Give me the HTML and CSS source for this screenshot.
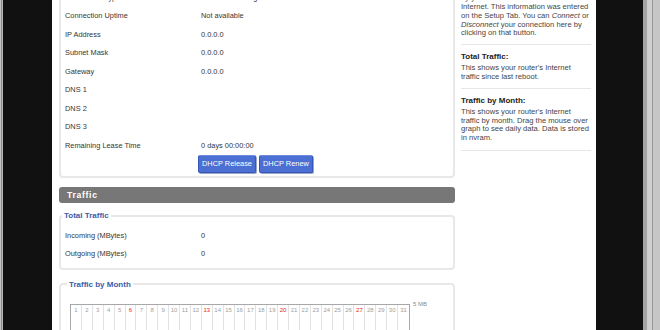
FILE: index.html
```html
<!DOCTYPE html>
<html lang="en">
<head>
    <meta charset="UTF-8">
    <meta name="viewport" content="width=device-width, initial-scale=1.0">
    <title>Status - WAN</title>
    <link rel="stylesheet" href="styles.css">
</head>
<body>
    <div class="screen">
        <div class="edge edge-left"></div>
        <div class="bezel"></div>

        <div class="page">
            <div class="main">
                <div class="panel">
                    <div class="row"><span class="label">Connection Type</span><span class="value">Automatic Configuration - DHCP</span></div>
                    <div class="row"><span class="label">Connection Uptime</span><span class="value">Not available</span></div>
                    <div class="row"><span class="label">IP Address</span><span class="value">0.0.0.0</span></div>
                    <div class="row"><span class="label">Subnet Mask</span><span class="value">0.0.0.0</span></div>
                    <div class="row"><span class="label">Gateway</span><span class="value">0.0.0.0</span></div>
                    <div class="row"><span class="label">DNS 1</span><span class="value"></span></div>
                    <div class="row"><span class="label">DNS 2</span><span class="value"></span></div>
                    <div class="row"><span class="label">DNS 3</span><span class="value"></span></div>
                    <div class="row"><span class="label">Remaining Lease Time</span><span class="value">0 days 00:00:00</span></div>
                    <div class="row actions">
                        <button class="btn">DHCP Release</button>
                        <button class="btn">DHCP Renew</button>
                    </div>
                </div>

                <h2 class="section-bar">Traffic</h2>

                <fieldset class="group">
                    <legend>Total Traffic</legend>
                    <div class="row"><span class="label">Incoming (MBytes)</span><span class="value">0</span></div>
                    <div class="row"><span class="label">Outgoing (MBytes)</span><span class="value">0</span></div>
                </fieldset>

                <fieldset class="group month">
                    <legend>Traffic by Month</legend>
                    <div class="graph-wrap">
                        <div class="graph">
                            <span>1</span><span>2</span><span>3</span><span>4</span><span>5</span>
                            <span class="sun">6</span><span>7</span><span>8</span><span>9</span><span>10</span>
                            <span>11</span><span>12</span><span class="sun">13</span><span>14</span><span>15</span>
                            <span>16</span><span>17</span><span>18</span><span>19</span><span class="sun">20</span>
                            <span>21</span><span>22</span><span>23</span><span>24</span><span>25</span>
                            <span>26</span><span class="sun">27</span><span>28</span><span>29</span><span>30</span>
                            <span>31</span>
                        </div>
                        <span class="scale">5 MB</span>
                    </div>
                </fieldset>
            </div>

            <div class="help">
                <div class="help-item">
                    <h4>WAN:</h4>
                    <p>This shows the information required by your ISP for connection to the Internet. This information was entered on the Setup Tab. You can <em>Connect</em> or <em>Disconnect</em> your connection here by clicking on that button.</p>
                </div>
                <div class="help-item">
                    <h4>Total Traffic:</h4>
                    <p>This shows your router's Internet traffic since last reboot.</p>
                </div>
                <div class="help-item">
                    <h4>Traffic by Month:</h4>
                    <p>This shows your router's Internet traffic by month. Drag the mouse over graph to see daily data. Data is stored in nvram.</p>
                </div>
            </div>
        </div>

        <div class="bezel bezel-right"></div>
        <div class="edge edge-right"></div>
    </div>
</body>
</html>
```

FILE: styles.css
```css
/* Router status page, shown inside a dark monitor frame */
body {
    margin: 0;
    overflow: hidden;
    font-family: 'Liberation Sans', Arial, sans-serif;
    font-size: 7.4px;
    color: #363636;
    background-color: #111;
}

.screen {
    display: flex;
    height: 330px;
}

.edge {
    flex: none;
}

.edge-left {
    width: 3px;
    background: linear-gradient(to right, #c4c4c4 0, #c4c4c4 1px, #8c8c8c 1px, #8c8c8c 2px, #b8b8b8 2px);
}

.edge-right {
    width: 17px;
    background: linear-gradient(to right, #a4a4a4 0, #a4a4a4 4px, #cfcfcf 4px, #cfcfcf 9px, #999 9px, #999 10px, #c6c6c6 10px);
}

.bezel {
    flex: none;
    width: 49px;
    background-color: #111;
}

.bezel-right {
    width: 47px;
}

.page {
    flex: 1;
    display: flex;
    overflow: hidden;
    background-color: #fff;
}

.main {
    flex: none;
    width: 396px;
    margin-left: 7px;
}

/* panels */
.panel {
    margin-top: -16px;
    padding: 2px 0 2.5px 4px;
    border: 2px solid #e8e8e8;
    border-radius: 4px;
}

.row {
    display: flex;
    align-items: center;
    height: 18.5px;
}

.label {
    flex: none;
    width: 136px;
}

.actions {
    padding-left: 133px;
    gap: 3px;
}

.btn {
    font-family: inherit;
    font-size: 7.4px;
    height: 18px;
    padding: 0 3px;
    color: #fff;
    background-color: #4b6fd2;
    border: 1px solid #3657b6;
    border-top-color: #6d8ae0;
    border-radius: 2px;
    box-shadow: 1px 1px 0 #9aa6c4;
    cursor: pointer;
}

.section-bar {
    margin: 9px 0 0;
    height: 16px;
    padding-left: 8px;
    line-height: 16px;
    font-size: 8.6px;
    font-weight: bold;
    letter-spacing: 0.7px;
    color: #fff;
    background-color: #777;
    border-radius: 3px;
}

.group {
    margin: 8.5px 0 0;
    padding: 6px 0 5px 4px;
    border: 2px solid #e8e8e8;
    border-radius: 4px;
}

.group legend {
    margin-left: -3px;
    padding: 0 2px;
    line-height: 9px;
    font-size: 8px;
    font-weight: bold;
    color: #3d5ba9;
}

.month {
    margin-top: 9.5px;
    padding: 15.5px 0 0 9px;
}

/* traffic graph */
.graph-wrap {
    display: flex;
    align-items: flex-start;
}

.graph {
    display: grid;
    grid-template-columns: repeat(31, 1fr);
    width: 338px;
    height: 60px;
    border: 1px solid #a8a8a8;
    border-bottom: none;
}

.graph span {
    padding-top: 1px;
    line-height: 8px;
    font-size: 6px;
    text-align: center;
    color: #a0a0a0;
    border-right: 1px solid #e2e2e2;
}

.graph span:last-child {
    border-right: none;
}

.graph .sun {
    color: #e22;
}

.scale {
    margin: -3px 0 0 3px;
    font-size: 6px;
    color: #8a8a8a;
}

/* help column */
.help {
    flex: none;
    width: 130px;
    margin: -33px 5px 0 6px;
    color: #454545;
    font-size: 7.6px;
}

.help-item {
    padding: 7px 0;
    border-bottom: 1px solid #e6e6e6;
}

.help-item:first-child {
    padding-bottom: 6px;
}

.help-item h4 {
    margin: 0 0 2.5px;
    line-height: 9px;
    font-size: 8px;
    color: #222;
}

.help-item p {
    margin: 0;
    line-height: 8.8px;
}
```
